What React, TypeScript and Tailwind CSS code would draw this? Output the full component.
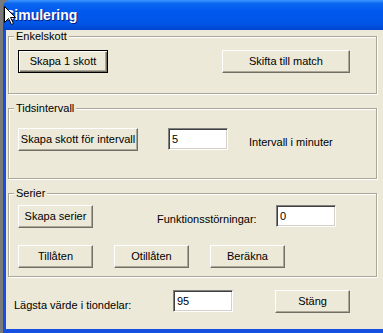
import React from 'react';

const BTN =
  'h-[23px] shrink-0 bg-[#ece9d8] text-[11px] text-black border border-t-white border-l-white border-r-[#716f64] border-b-[#716f64] shadow-[inset_-1px_-1px_0_#aca899]';
const BTN_DEFAULT =
  'h-[23px] shrink-0 bg-[#ece9d8] text-[11px] text-black border border-black shadow-[inset_1px_1px_0_#fff,inset_-1px_-1px_0_#716f64,inset_-2px_-2px_0_#aca899]';
const EDIT =
  'h-[22px] w-[60px] shrink-0 bg-white px-[3px] text-[11px] text-black outline-none border border-t-[#808080] border-l-[#808080] border-r-white border-b-white shadow-[inset_1px_1px_0_#404040,inset_-1px_-1px_0_#d4d0c8]';
const GROUP =
  'ml-[2px] w-[369px] border border-[#aca899] shadow-[inset_1px_1px_0_#fff,1px_1px_0_#fff]';
const LEGEND = 'ml-[5px] bg-[#ece9d8] px-[2px] text-[11px] leading-[12px] text-black';

function Cursor() {
  return (
    <svg className="absolute left-[4px] top-[6px]" width="13" height="20" viewBox="0 0 13 20">
      <path
        d="M0.5 0.5 V16.5 L4.5 12.5 L7.5 18.5 L9.5 17.5 L6.5 11.5 H11.5 Z"
        fill="#fff"
        stroke="#000"
        strokeWidth="1"
        strokeLinejoin="miter"
      />
    </svg>
  );
}

export default function App() {
  return (
    <div className="relative flex h-[333px] w-[383px] overflow-hidden bg-[#7a7a7a] font-['Liberation_Sans',Arial,sans-serif]">
      <div className="w-[3px] shrink-0" />
      <div className="flex flex-1 flex-col overflow-hidden rounded-tl-[7px]">
        {/* Title bar */}
        <div className="flex h-[30px] shrink-0 items-center bg-[linear-gradient(180deg,#3d95ff_0%,#0a66f0_12%,#0058ee_40%,#0055e5_80%,#0043cf_100%)] pl-[2px]">
          <span className="text-[14px] font-bold text-white [text-shadow:1px_1px_0_#0a1f80]">Simulering</span>
        </div>

        {/* Client */}
        <div className="flex flex-1 border-l-[3px] border-b-[4px] border-[#1650e0] bg-[#ece9d8]">
          <div className="flex flex-1 flex-col">
            <fieldset className={`${GROUP} h-[64px]`}>
              <legend className={LEGEND}>Enkelskott</legend>
              <div className="mt-[8px] flex pl-[9px]">
                <button className={`${BTN_DEFAULT} w-[90px]`}>Skapa 1 skott</button>
                <button className={`${BTN} ml-[114px] w-[128px]`}>Skifta till match</button>
              </div>
            </fieldset>

            <fieldset className={`${GROUP} mt-[8px] h-[77px]`}>
              <legend className={LEGEND}>Tidsintervall</legend>
              <div className="mt-[14px] flex items-start pl-[9px]">
                <button className={`${BTN} w-[120px]`}>Skapa skott för intervall</button>
                <input className={`${EDIT} ml-[30px]`} defaultValue="5" readOnly />
                <span className="ml-[21px] pt-[6px] text-[11px] text-black">Intervall i minuter</span>
              </div>
            </fieldset>

            <fieldset className={`${GROUP} mt-[8px] h-[90px]`}>
              <legend className={LEGEND}>Serier</legend>
              <div className="mt-[6px] flex items-start pl-[9px]">
                <button className={`${BTN} w-[75px]`}>Skapa serier</button>
                <span className="ml-[64px] w-[119px] pt-[6px] text-[11px] text-black">Funktionsstörningar:</span>
                <input className={EDIT} defaultValue="0" readOnly />
              </div>
              <div className="mt-[17px] flex pl-[9px]">
                <button className={`${BTN} w-[75px]`}>Tillåten</button>
                <button className={`${BTN} ml-[21px] w-[75px]`}>Otillåten</button>
                <button className={`${BTN} ml-[21px] w-[75px]`}>Beräkna</button>
              </div>
            </fieldset>

            <div className="mt-[13px] flex items-start pl-[8px]">
              <span className="w-[159px] pt-[7px] text-[11px] text-black">Lägsta värde i tiondelar:</span>
              <input className={EDIT} defaultValue="95" readOnly />
              <button className={`${BTN} ml-[42px] w-[75px]`}>Stäng</button>
            </div>
          </div>
        </div>
      </div>
      <Cursor />
    </div>
  );
}
